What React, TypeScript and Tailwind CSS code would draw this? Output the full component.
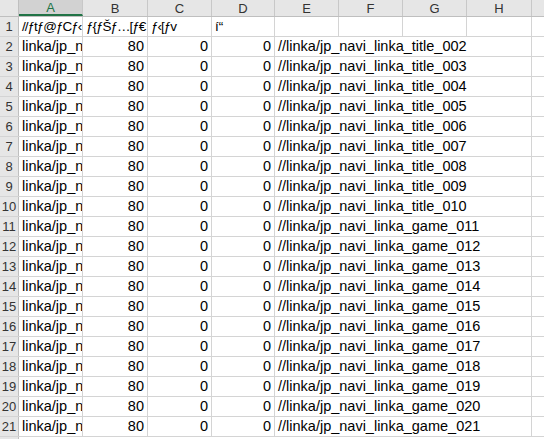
const COLS = [
  { label: "A", w: "w-[64px]" },
  { label: "B", w: "w-[65px]" },
  { label: "C", w: "w-[64px]" },
  { label: "D", w: "w-[63px]" },
  { label: "E", w: "w-[64px]" },
  { label: "F", w: "w-[64px]" },
  { label: "G", w: "w-[64px]" },
  { label: "H", w: "w-[65px]" },
];

const ROWS: string[] = [];
for (let i = 2; i <= 10; i++) ROWS.push(`//linka/jp_navi_linka_title_${String(i).padStart(3, "0")}`);
for (let i = 11; i <= 21; i++) ROWS.push(`//linka/jp_navi_linka_game_${String(i).padStart(3, "0")}`);

const cell = "h-full shrink-0 border-r border-[#d4d4d4] overflow-hidden whitespace-nowrap";
const head = "flex items-center pl-[3px] text-[13.5px] tracking-[-1px]";

function RowHead({ n }: { n?: number }) {
  return (
    <div className="w-[19px] h-full shrink-0 bg-[#e6e6e6] border-r border-[#bfbfbf] flex items-center justify-center text-[13px] text-[#333]">
      {n}
    </div>
  );
}

export default function App() {
  return (
    <div
      className="w-[544px] h-[439px] overflow-hidden bg-white text-[#000] text-[14.5px] leading-none"
      style={{ fontFamily: '"Liberation Sans", Arial, sans-serif' }}
    >
      {/* column headers */}
      <div className="flex h-[17px] bg-[#e6e6e6] border-b border-[#bfbfbf]">
        <div className="w-[19px] h-full shrink-0 border-r border-[#bfbfbf]" />
        {COLS.map((c, i) => (
          <div
            key={c.label}
            className={`${c.w} h-full shrink-0 border-r border-[#c8c8c8] flex items-center justify-center text-[13px] ${
              i === 0 ? "bg-[#d2d2d2] text-[#217346] border-b-2 border-b-[#217346]" : "text-[#333]"
            }`}
          >
            {c.label}
          </div>
        ))}
        <div className="flex-1 h-full" />
      </div>

      {/* row 1: column titles (garbled Shift-JIS) */}
      <div className="flex h-[20px] border-b border-[#d4d4d4]">
        <RowHead n={1} />
        <div className={`${cell} w-[64px] ${head}`}>//ƒtƒ@ƒCƒ‹</div>
        <div className={`${cell} w-[65px] ${head}`}>ƒ{"{"}ƒŠƒ…[ƒ€</div>
        <div className={`${cell} w-[64px] ${head}`}>ƒ‹[ƒv</div>
        <div className={`${cell} w-[63px] flex items-center pl-[3px] text-[13.5px]`}>í“</div>
        <div className={`${cell} w-[64px]`} />
        <div className={`${cell} w-[64px]`} />
        <div className={`${cell} w-[64px]`} />
        <div className={`${cell} w-[65px]`} />
        <div className="flex-1" />
      </div>

      {ROWS.map((path, idx) => (
        <div key={path} className="flex h-[20px] border-b border-[#d4d4d4]">
          <RowHead n={idx + 2} />
          <div className={`${cell} w-[64px] flex items-center pl-[3px]`}>linka/jp_n</div>
          <div className={`${cell} w-[65px] flex items-center justify-end pr-[3px]`}>80</div>
          <div className={`${cell} w-[64px] flex items-center justify-end pr-[3px]`}>0</div>
          <div className={`${cell} w-[63px] flex items-center justify-end pr-[3px]`}>0</div>
          {/* long path spills over the empty E–H cells */}
          <div className={`${cell} w-[257px] flex items-center pl-[3px]`}>{path}</div>
          <div className="flex-1" />
        </div>
      ))}

      <div className="flex h-[20px]">
        <RowHead />
      </div>
    </div>
  );
}
